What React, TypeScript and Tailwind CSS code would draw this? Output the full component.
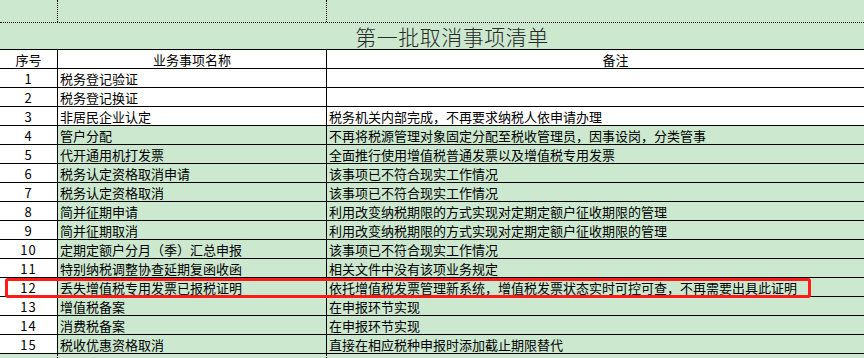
import React from "react";

interface Row {
  no: number;
  name: string;
  note: string;
}

const rows: Row[] = [
  { no: 1, name: "税务登记验证", note: "" },
  { no: 2, name: "税务登记换证", note: "" },
  { no: 3, name: "非居民企业认定", note: "税务机关内部完成，不再要求纳税人依申请办理" },
  { no: 4, name: "管户分配", note: "不再将税源管理对象固定分配至税收管理员，因事设岗，分类管事" },
  { no: 5, name: "代开通用机打发票", note: "全面推行使用增值税普通发票以及增值税专用发票" },
  { no: 6, name: "税务认定资格取消申请", note: "该事项已不符合现实工作情况" },
  { no: 7, name: "税务认定资格取消", note: "该事项已不符合现实工作情况" },
  { no: 8, name: "简并征期申请", note: "利用改变纳税期限的方式实现对定期定额户征收期限的管理" },
  { no: 9, name: "简并征期取消", note: "利用改变纳税期限的方式实现对定期定额户征收期限的管理" },
  { no: 10, name: "定期定额户分月（季）汇总申报", note: "该事项已不符合现实工作情况" },
  { no: 11, name: "特别纳税调整协查延期复函收函", note: "相关文件中没有该项业务规定" },
  { no: 12, name: "丢失增值税专用发票已报税证明", note: "依托增值税发票管理新系统，增值税发票状态实时可控可查，不再需要出具此证明" },
  { no: 13, name: "增值税备案", note: "在申报环节实现" },
  { no: 14, name: "消费税备案", note: "在申报环节实现" },
  { no: 15, name: "税收优惠资格取消", note: "直接在相应税种申报时添加截止期限替代" },
];

const font = { fontFamily: '"Noto Sans CJK SC", "Noto Sans", sans-serif' };

export default function App() {
  return (
    <div className="relative w-[864px] h-[358px] overflow-hidden bg-[#cce8cf] text-black text-[13px] leading-none" style={font}>
      <div className="w-[904px]">
        {/* empty top row */}
        <div className="grid grid-cols-[58px_269px_577px] h-[23px] border-b border-dotted border-black">
          <div className="border-r border-dotted border-black" />
          <div className="border-r border-dotted border-black" />
          <div />
        </div>

        {/* title */}
        <div className="h-[26px] flex items-center justify-center text-[21px] font-light text-[#2a2a2a] tracking-[0.5px]">
          第一批取消事项清单
        </div>

        {/* table */}
        <div className="border-t border-black">
          <div className="grid grid-cols-[58px_269px_577px] h-[19px] bg-white">
            <div className="border-r border-b border-black flex items-center justify-center">序号</div>
            <div className="border-r border-b border-black flex items-center justify-center">业务事项名称</div>
            <div className="border-b border-black flex items-center justify-center">备注</div>
          </div>
          {rows.map((r) => {
            const bg = r.no <= 3 ? "bg-white" : "bg-[#cce8cf]";
            return (
              <div key={r.no} className="grid grid-cols-[58px_269px_577px] h-[19px]">
                <div className="bg-white border-r border-b border-black flex items-center justify-center tracking-[1px]">{r.no}</div>
                <div className={`${bg} border-r border-b border-black flex items-center pl-[2px] whitespace-nowrap`}>{r.name}</div>
                <div className={`${bg} border-b border-black flex items-center pl-[2px] whitespace-nowrap`}>{r.note}</div>
              </div>
            );
          })}
          <div className="grid grid-cols-[58px_269px_577px] h-[10px]">
            <div className="border-r border-dotted border-black" />
            <div className="border-r border-dotted border-black" />
            <div />
          </div>
        </div>
      </div>

      {/* red annotation box */}
      <div className="absolute left-[5px] top-[278px] w-[806px] h-[20px] border-[3px] border-[#ff1a1a] rounded-[3px] pointer-events-none" />
    </div>
  );
}
